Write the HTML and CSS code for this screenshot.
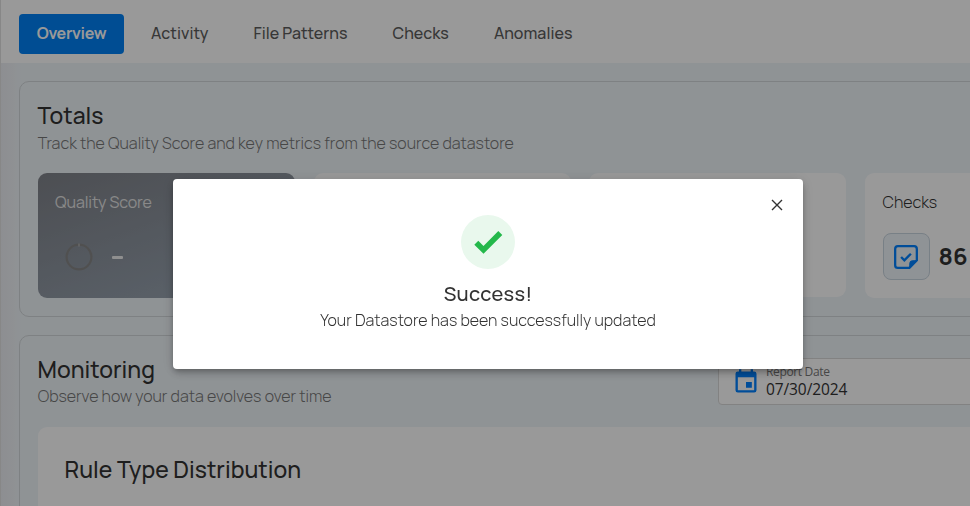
FILE: index.html
```html
<!DOCTYPE html>
<html lang="en">
<head>
<meta charset="utf-8">
<title>Datastore overview</title>
<link rel="stylesheet" href="styles.css">
</head>
<body>
<div class="page">
  <nav class="tabs">
    <a class="tab active">Overview</a>
    <a class="tab">Activity</a>
    <a class="tab">File Patterns</a>
    <a class="tab">Checks</a>
    <a class="tab">Anomalies</a>
  </nav>
  <main class="content">
    <section class="panel totals">
      <h2 class="title">Totals</h2>
      <p class="subtitle">Track the Quality Score and key metrics from the source datastore</p>
      <div class="cards">
        <div class="card quality">
          <div class="label">Quality Score</div>
          <div class="metric score">
            <svg class="ring" width="28" height="28" viewBox="0 0 28 28" fill="none"><circle cx="14" cy="14" r="12.4" stroke="#868686" stroke-width="2.2"/><path d="M14 .5v3" stroke="#c0c0c0"/></svg>
            <span class="dash"></span>
          </div>
        </div>
        <div class="card plain"></div>
        <div class="card plain"></div>
        <div class="card checks">
          <div class="label">Checks</div>
          <div class="metric">
            <span class="tile"><svg width="26" height="26" viewBox="0 0 24 24" fill="none" stroke="#0080ff" stroke-width="2.1"><path d="M22 15V4.500A2.500 2.500 0 0 0 19.500 2H4.500A2.500 2.500 0 0 0 2 4.500v15A2.500 2.500 0 0 0 4.500 22H15z" stroke-linejoin="round"/><path d="M15.500 22v-3.500a3 3 0 0 1 3-3H22z" fill="#0080ff" stroke-width="1"/><path d="m7.500 12 3 3 6-6" stroke-width="2.200"/></svg></span>
            <span class="number">86</span>
          </div>
        </div>
      </div>
    </section>
    <section class="panel monitoring">
      <div class="monitor-head">
        <div>
          <h2 class="title">Monitoring</h2>
          <p class="subtitle">Observe how your data evolves over time</p>
        </div>
        <div class="date">
          <svg width="28" height="28" viewBox="0 0 24 24" fill="#0080ff"><path d="M19 3h-1V1h-2v2H8V1H6v2H5a2 2 0 0 0-2 2v14a2 2 0 0 0 2 2h14a2 2 0 0 0 2-2V5a2 2 0 0 0-2-2zm0 16H5V8h14v11zm-2-7h-5v5h5v-5z"/></svg>
          <div><div class="date-label">Report Date</div><div class="date-value">07/30/2024</div></div>
        </div>
      </div>
      <div class="chart"><h3 class="title">Rule Type Distribution</h3></div>
    </section>
  </main>
</div>
<div class="scrim">
  <div class="dialog" role="dialog">
    <svg class="close" width="12" height="12" viewBox="0 0 12 12" fill="none" stroke="#333" stroke-width="1.400"><path d="m1 1 10 10M11 1 1 11"/></svg>
    <div class="badge"><svg width="54" height="54" viewBox="0 0 54 54" fill="none" stroke="#24b84b" stroke-width="5.600"><path d="m15.300 27.700 7.200 7.200L39.300 18"/></svg></div>
    <h1 class="success">Success!</h1>
    <p class="message">Your Datastore has been successfully updated</p>
  </div>
</div>
</body>
</html>
```
FILE: styles.css
```css
* { box-sizing: border-box; }
body { margin: 0; height: 506px; overflow: hidden; font-family: Manrope, Inter, sans-serif; color: #333; }
h1, h2, h3, p { margin: 0; }
.page { height: 506px; overflow: hidden; background: #eff5f9; border-left: 1px solid #e2e2e2; }
.tabs { height: 63px; background: #fff; display: flex; align-items: center; padding: 5px 0 0 18px; }
.tab { font-size: 16px; font-weight: 500; line-height: 38px; height: 40px; letter-spacing: .03px; color: #5c5c5c; white-space: nowrap; margin-right: 45px; }
.tab.active { width: 105px; margin-right: 27px; background: #0080f5; color: #fff; border-radius: 4px; text-align: center; font-weight: 700; letter-spacing: -.3px; }
.content { width: 1139px; padding: 18px 0 0 18px; background: linear-gradient(90deg, #ecedf2 0, #eff5f9 20px); display: flex; flex-direction: column; gap: 18px; }
.panel { border: 1px solid #d2d7da; border-radius: 10px; padding: 18px; }
.totals { height: 236px; width: 1121px; }
.monitoring { height: 300px; width: 1121px; }
.title { font-weight: 500; font-size: 22.9px; line-height: 32px; letter-spacing: .03px; margin-left: -.5px; }
.subtitle { font-size: 16px; font-weight: 300; line-height: 23px; color: #777; margin-left: -.3px; }
.monitoring .subtitle { line-height: 21px; }
.cards { display: grid; grid-template-columns: repeat(4, 257px); gap: 18.7px; margin-top: 18px; }
.card { height: 125px; border-radius: 9px; background: #fff; padding: 17px; }
.card.plain { height: 124px; }
.card.checks { padding-left: 17.5px; }
.card.quality { background: linear-gradient(160deg, #80838a, #9ba8b6); color: #e4e4e4; }
.label { font-size: 16px; line-height: 24px; font-weight: 300; }
.quality .label { font-weight: 400; letter-spacing: -.1px; }
.metric { display: flex; align-items: center; gap: 9px; margin-top: 19px; }
.score { padding: 10px 0 0 10px; gap: 19px; }
.dash { width: 11px; height: 3px; background: #eee; border-radius: 1px; }
.tile { width: 47px; height: 47px; border: 1px solid #c9d5df; border-radius: 8px; background: #eff5fa; display: flex; align-items: center; justify-content: center; }
.number { font-size: 23.5px; font-weight: 700; line-height: 45px; }
.monitor-head { display: flex; justify-content: space-between; height: 73px; }
.date { width: 403px; height: 47px; margin-top: 4px; background: #fff; border: 1px solid #d9d9d9; border-radius: 4px; padding-left: 13px; display: flex; align-items: center; gap: 6px; font-family: "Open Sans", "Noto Sans", sans-serif; }
.date-label { font-size: 12px; line-height: 17px; color: #777; letter-spacing: -.35px; margin-top: -2px; }
.date-value { font-size: 15.5px; font-weight: 380; line-height: 19px; letter-spacing: -.1px; }
.chart { height: 220px; background: #fff; border-radius: 9px; padding: 27px; }
.scrim { position: fixed; inset: 0; background: rgba(0,0,0,.4); display: flex; padding: 179px 0 0 173px; align-items: flex-start; }
.dialog { position: relative; width: 630px; height: 190px; padding-top: 36px; background: #fff; border-radius: 4px; text-align: center; display: flex; flex-direction: column; align-items: center; box-shadow: 0 3px 5px -1px rgba(0,0,0,.2), 0 5px 8px rgba(0,0,0,.14), 0 1px 14px rgba(0,0,0,.12); }
.close { position: absolute; right: 20px; top: 20px; }
.badge { width: 54px; height: 54px; border-radius: 50%; background: #e9f8ed; }
.success { font-size: 20px; line-height: 30px; font-weight: 500; letter-spacing: .3px; margin-top: 10px; }
.message { font-size: 16px; line-height: 23px; font-weight: 300; }
```
